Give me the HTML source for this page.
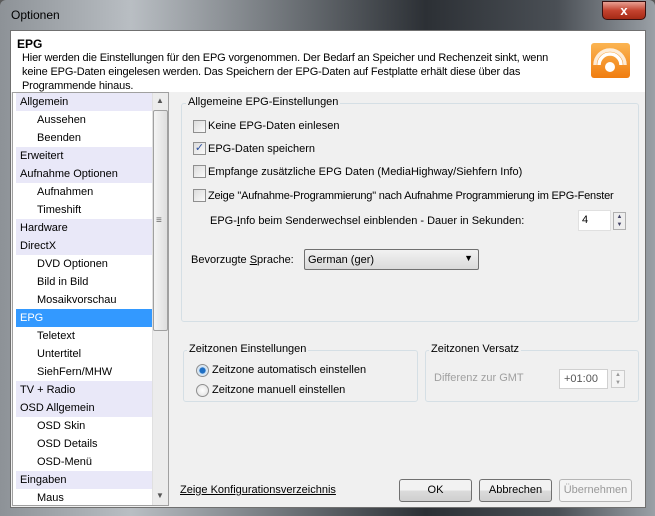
<!DOCTYPE html>
<html><head><meta charset="utf-8"><style>
*{box-sizing:border-box;margin:0;padding:0}
body{width:655px;height:516px;overflow:hidden;font-family:"Liberation Sans",sans-serif;font-size:11px;color:#000;position:relative;background:#5a5a5a;white-space:nowrap}
.abs{position:absolute}
.frame{left:0;top:0;width:655px;height:516px;background:linear-gradient(90deg,#8d9297 0%,#b9bec3 20%,#6b7075 45%,#2c3035 65%,#4a4f55 85%,#9aa0a6 100%);border-radius:6px 6px 0 0}
.client{left:10px;top:30px;width:636px;height:478px;background:#f0f0f0;border:1px solid #707070}
.hdr{left:11px;top:31px;width:634px;height:61px;background:#fff}
.list{left:12px;top:92px;width:157px;height:414px;background:#fff;border:1px solid #a0a0a0;overflow:hidden}
.it{position:absolute;left:3px;width:137px;height:18px;line-height:18px;padding-left:4px}
.cat{background:#e9e8f8}
.sub{padding-left:21px}
.sel{background:#3399ff;color:#fff}
.gb{border:1px solid #d5dfe5;border-radius:3px}
.gl{position:absolute;background:#f0f0f0;padding:0 2px;top:-8px;left:4px}
.cb{position:absolute;width:13px;height:13px;border:1px solid #8f8f8f;background:linear-gradient(135deg,#dcdcdc,#fafafa)}
.btn{position:absolute;height:23px;border:1px solid #707070;border-radius:3px;background:linear-gradient(#f2f2f2 50%,#dcdcdc 50%,#cfcfcf);text-align:center;line-height:21px}
.rd{position:absolute;width:13px;height:13px;border-radius:50%;border:1px solid #8f8f8f;background:radial-gradient(#fff,#ddd)}
</style></head><body>
<div class="abs frame"></div>
<div class="abs" style="left:11px;top:8px;font-size:12px;color:#000">Optionen</div>
<div class="abs" style="left:602px;top:1px;width:44px;height:19px;border-radius:0 0 5px 5px;border:1px solid #3a1010;background:linear-gradient(#e8a094,#c4432f 50%,#a52a15);color:#fff;font-weight:bold;text-align:center;line-height:17px;font-size:13px">x</div>
<div class="abs client"></div>
<div class="abs hdr"></div>
<div class="abs" style="left:17px;top:37px;font-weight:bold;font-size:12px">EPG</div>
<div class="abs" style="left:22px;top:51px;line-height:14px;letter-spacing:-0.15px">Hier werden die Einstellungen für den EPG vorgenommen. Der Bedarf an Speicher und Rechenzeit sinkt, wenn<br>keine EPG-Daten eingelesen werden. Das Speichern der EPG-Daten auf Festplatte erhält diese über das<br>Programmende hinaus.</div>
<div class="abs" style="left:591px;top:43px;width:39px;height:35px;border-radius:3px;background:linear-gradient(#fbb553,#f07d10)">
<svg width="39" height="35" viewBox="0 0 39 35"><g fill="none" stroke="#fff" stroke-width="3.5"><path d="M8 22a11 11 0 0 1 22 0"/><path d="M4 22a15 15 0 0 1 30 0" opacity=".8"/></g><circle cx="19" cy="24" r="5" fill="#fff"/></svg></div>
<div class="abs list">
<div class="it cat" style="top:0">Allgemein</div>
<div class="it sub" style="top:18px">Aussehen</div>
<div class="it sub" style="top:36px">Beenden</div>
<div class="it cat" style="top:54px">Erweitert</div>
<div class="it cat" style="top:72px">Aufnahme Optionen</div>
<div class="it sub" style="top:90px">Aufnahmen</div>
<div class="it sub" style="top:108px">Timeshift</div>
<div class="it cat" style="top:126px">Hardware</div>
<div class="it cat" style="top:144px">DirectX</div>
<div class="it sub" style="top:162px">DVD Optionen</div>
<div class="it sub" style="top:180px">Bild in Bild</div>
<div class="it sub" style="top:198px">Mosaikvorschau</div>
<div class="it sel" style="top:216px">EPG</div>
<div class="it sub" style="top:234px">Teletext</div>
<div class="it sub" style="top:252px">Untertitel</div>
<div class="it sub" style="top:270px">SiehFern/MHW</div>
<div class="it cat" style="top:288px">TV + Radio</div>
<div class="it cat" style="top:306px">OSD Allgemein</div>
<div class="it sub" style="top:324px">OSD Skin</div>
<div class="it sub" style="top:342px">OSD Details</div>
<div class="it sub" style="top:360px">OSD-Menü</div>
<div class="it cat" style="top:378px">Eingaben</div>
<div class="it sub" style="top:396px">Maus</div>
<div style="position:absolute;left:139px;top:0;width:17px;height:412px;background:#ececec;border-left:1px solid #e0e0e0"></div>
<div style="position:absolute;left:140px;top:17px;width:15px;height:221px;border:1px solid #a0a0a0;border-radius:2px;background:linear-gradient(90deg,#f4f4f4,#dedede)"></div>
<div style="position:absolute;left:143px;top:3px;font-size:8px;color:#555">▲</div>
<div style="position:absolute;left:143px;top:398px;font-size:8px;color:#555">▼</div>
<div style="position:absolute;left:143px;top:122px;font-size:10px;color:#666">≡</div>
</div>
<div class="abs gb" style="left:181px;top:103px;width:458px;height:219px"><span class="gl">Allgemeine EPG-Einstellungen</span></div>
<div class="cb" style="left:193px;top:120px"></div><div class="abs" style="left:208px;top:120px">Keine EPG-Daten einlesen</div>
<div class="cb" style="left:193px;top:142px;color:#2a4f9f;font-size:11px;line-height:11px;text-align:center">✓</div><div class="abs" style="left:208px;top:143px">EPG-Daten speichern</div>
<div class="cb" style="left:193px;top:165px"></div><div class="abs" style="left:208px;top:166px">Empfange zusätzliche EPG Daten (MediaHighway/Siehfern Info)</div>
<div class="cb" style="left:193px;top:189px"></div><div class="abs" style="left:208px;top:190px;letter-spacing:-0.2px">Zeige "Aufnahme-Programmierung" nach Aufnahme Programmierung im EPG-Fenster</div>
<div class="abs" style="left:210px;top:215px">EPG-<u>I</u>nfo beim Senderwechsel einblenden - Dauer in Sekunden:</div>
<div class="abs" style="left:578px;top:210px;width:33px;height:21px;background:#fff;border:1px solid #e0e0e0;padding:3px 0 0 3px">4</div>
<div class="abs" style="left:613px;top:212px;width:13px;height:18px;border:1px solid #b0b0b0;background:#eee;font-size:6px;line-height:8px;text-align:center;color:#446">▲<br>▼</div>
<div class="abs" style="left:191px;top:254px">Bevorzugte <u>S</u>prache:</div>
<div class="abs" style="left:304px;top:249px;width:175px;height:21px;border:1px solid #707070;border-radius:2px;background:linear-gradient(#f2f2f2,#dadada);padding:4px 0 0 3px">German (ger)<span style="position:absolute;right:5px;top:3px;font-size:9px">▼</span></div>
<div class="abs gb" style="left:183px;top:350px;width:235px;height:52px"><span class="gl" style="left:3px">Zeitzonen Einstellungen</span></div>
<div class="rd" style="left:196px;top:364px;background:radial-gradient(#1f6fc4 35%,#cfe3f5 45%,#eee)"></div><div class="abs" style="left:212px;top:364px">Zeitzone automatisch einstellen</div>
<div class="rd" style="left:196px;top:384px"></div><div class="abs" style="left:212px;top:384px">Zeitzone manuell einstellen</div>
<div class="abs gb" style="left:425px;top:350px;width:214px;height:52px"><span class="gl" style="left:3px">Zeitzonen Versatz</span></div>
<div class="abs" style="left:434px;top:372px;color:#a0a0a0">Differenz zur GMT</div>
<div class="abs" style="left:559px;top:369px;width:49px;height:20px;background:#fff;border:1px solid #d0d0d0;padding:3px 0 0 4px;color:#555">+01:00</div>
<div class="abs" style="left:611px;top:370px;width:14px;height:18px;border:1px solid #ccc;background:#f4f4f4;font-size:6px;line-height:8px;text-align:center;color:#999">▲<br>▼</div>
<div class="abs" style="left:180px;top:484px;text-decoration:underline">Zeige Konfigurationsverzeichnis</div>
<div class="btn" style="left:399px;top:479px;width:73px">OK</div>
<div class="btn" style="left:479px;top:479px;width:73px">Abbrechen</div>
<div class="btn" style="left:559px;top:479px;width:73px;color:#999;border-color:#b5b5b5;background:#f4f4f4">Übernehmen</div>
</body></html>
